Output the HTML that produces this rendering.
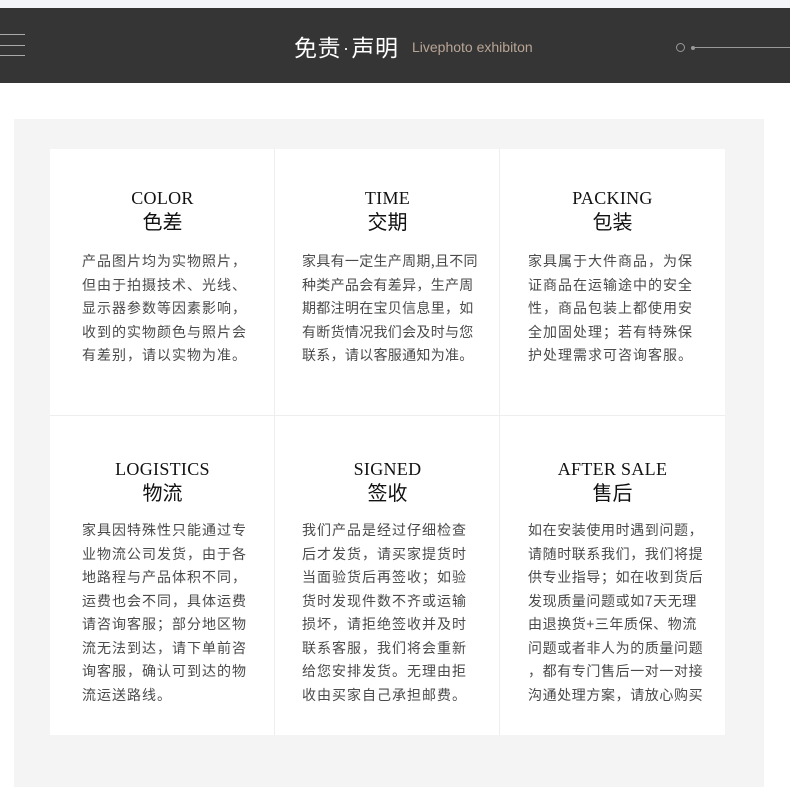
<!DOCTYPE html>
<html><head><meta charset="utf-8"><style>
*{margin:0;padding:0;box-sizing:border-box}
body{width:790px;height:787px;background:#fff;position:relative;overflow:hidden;font-family:"Liberation Sans","Noto Sans CJK SC",sans-serif}
.top{position:absolute;left:0;top:0;width:790px;height:8px;background:#f4f5f8}
.bar{position:absolute;left:0;top:8px;width:790px;height:75px;background:#353535}
.hl{position:absolute;left:0;width:25px;height:1px;background:#aaa}
.t1{position:absolute;left:294px;top:23px;color:#fff;font-size:23px;letter-spacing:0.5px;font-family:"Noto Sans CJK SC",sans-serif;line-height:30px;white-space:nowrap}
.dot{font-family:"Liberation Sans",sans-serif;font-size:18px;margin:0 2px;position:relative;top:-2px}
.t2{position:absolute;left:412px;top:30px;color:#b8a596;font-size:14px;line-height:18px}
.panel{position:absolute;left:14px;top:119px;width:750px;height:668px;background:#f4f4f4}
.grid{position:absolute;left:50px;top:149px;width:675px;height:586px;background:#fff}
.vl{position:absolute;top:149px;width:1px;height:586px;background:#eee}
.hz{position:absolute;left:50px;top:415px;width:675px;height:1px;background:#eee}
.cell{position:absolute;width:225px;text-align:center}
.en{font-family:"Liberation Serif",serif;font-size:18px;color:#111;line-height:20px;letter-spacing:0.3px}
.cn{font-family:"Noto Sans CJK SC",sans-serif;font-size:20px;color:#111;line-height:26px}
.body{position:absolute;font-family:"Noto Sans CJK SC",sans-serif;font-size:14px;color:#4a4a4a;line-height:23.5px;letter-spacing:1px;white-space:nowrap;text-align:left}
</style></head><body>
<div class="top"></div>
<div class="bar">
<div class="hl" style="top:26px"></div><div class="hl" style="top:37px"></div><div class="hl" style="top:47px"></div>
<div class="t1">免责<span class="dot">·</span>声明</div>
<div class="t2">Livephoto exhibiton</div>
<div style="position:absolute;left:676px;top:35px;width:9px;height:9px;border:1px solid #999;border-radius:50%"></div>
<div style="position:absolute;left:691px;top:38px;width:4px;height:4px;background:#999;border-radius:50%"></div>
<div style="position:absolute;left:694px;top:39px;width:96px;height:1px;background:#999"></div>
</div>
<div class="panel"></div>
<div class="grid"></div>
<div class="vl" style="left:274px"></div><div class="vl" style="left:499px"></div>
<div class="hz"></div>

<div class="cell" style="left:50px;top:188px"><div class="en">COLOR</div><div class="cn">色差</div></div>
<div class="cell" style="left:275px;top:188px"><div class="en">TIME</div><div class="cn">交期</div></div>
<div class="cell" style="left:500px;top:188px"><div class="en">PACKING</div><div class="cn">包装</div></div>
<div class="cell" style="left:50px;top:459px"><div class="en">LOGISTICS</div><div class="cn">物流</div></div>
<div class="cell" style="left:275px;top:459px"><div class="en">SIGNED</div><div class="cn">签收</div></div>
<div class="cell" style="left:500px;top:459px"><div class="en">AFTER SALE</div><div class="cn">售后</div></div>

<div class="body" style="left:82px;top:250px">产品图片均为实物照片，<br>但由于拍摄技术、光线、<br>显示器参数等因素影响，<br>收到的实物颜色与照片会<br>有差别，请以实物为准。</div>
<div class="body" style="left:302px;top:250px;letter-spacing:0.3px">家具有一定生产周期,且不同<br>种类产品会有差异，生产周<br>期都注明在宝贝信息里，如<br>有断货情况我们会及时与您<br>联系，请以客服通知为准。</div>
<div class="body" style="left:528px;top:250px">家具属于大件商品，为保<br>证商品在运输途中的安全<br>性，商品包装上都使用安<br>全加固处理；若有特殊保<br>护处理需求可咨询客服。</div>
<div class="body" style="left:82px;top:519px">家具因特殊性只能通过专<br>业物流公司发货，由于各<br>地路程与产品体积不同，<br>运费也会不同，具体运费<br>请咨询客服；部分地区物<br>流无法到达，请下单前咨<br>询客服，确认可到达的物<br>流运送路线。</div>
<div class="body" style="left:302px;top:519px">我们产品是经过仔细检查<br>后才发货，请买家提货时<br>当面验货后再签收；如验<br>货时发现件数不齐或运输<br>损坏，请拒绝签收并及时<br>联系客服，我们将会重新<br>给您安排发货。无理由拒<br>收由买家自己承担邮费。</div>
<div class="body" style="left:528px;top:519px;letter-spacing:0.6px">如在安装使用时遇到问题，<br>请随时联系我们，我们将提<br>供专业指导；如在收到货后<br>发现质量问题或如7天无理<br>由退换货+三年质保、物流<br>问题或者非人为的质量问题<br>，都有专门售后一对一对接<br>沟通处理方案，请放心购买</div>
</body></html>
